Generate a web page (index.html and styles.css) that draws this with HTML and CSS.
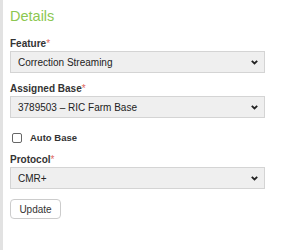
FILE: index.html
```html
<!DOCTYPE html>
<html lang="en">
<head>
    <meta charset="UTF-8">
    <title>Details</title>
    <link rel="stylesheet" href="styles.css">
</head>
<body>
    <div class="panel">
        <h2>Details</h2>
        <div class="field">
            <label>Feature<span class="req">*</span></label>
            <div class="select">
                <span>Correction Streaming</span>
                <svg class="chev" width="7" height="5" viewBox="0 0 7 5"><path d="M0.8 0.8l2.7 2.7 2.7-2.7" fill="none" stroke="#222" stroke-width="1.8"/></svg>
            </div>
        </div>
        <div class="field">
            <label>Assigned Base<span class="req">*</span></label>
            <div class="select">
                <span>3789503 &ndash; RIC Farm Base</span>
                <svg class="chev" width="7" height="5" viewBox="0 0 7 5"><path d="M0.8 0.8l2.7 2.7 2.7-2.7" fill="none" stroke="#222" stroke-width="1.8"/></svg>
            </div>
        </div>
        <div class="check">
            <span class="box"></span>
            <span>Auto Base</span>
        </div>
        <div class="field">
            <label>Protocol<span class="req">*</span></label>
            <div class="select">
                <span>CMR+</span>
                <svg class="chev" width="7" height="5" viewBox="0 0 7 5"><path d="M0.8 0.8l2.7 2.7 2.7-2.7" fill="none" stroke="#222" stroke-width="1.8"/></svg>
            </div>
        </div>
        <button class="btn">Update</button>
    </div>
</body>
</html>
```

FILE: styles.css
```css
body {
    margin: 0;
    font-family: 'Liberation Sans', Arial, sans-serif;
    background: white;
    color: #333;
}
.panel {
    border-left: 3px solid #e2e2e2;
    height: 250px;
    box-sizing: border-box;
    padding: 6px 22px 0 7px;
}
h2 {
    margin: 0 0 12px 0;
    font-size: 14.5px;
    line-height: 20px;
    font-weight: normal;
    color: #8cc751;
}
.field {
    margin-bottom: 10px;
}
label {
    display: block;
    font-size: 10px;
    line-height: 12px;
    font-weight: bold;
    color: #333;
    margin-bottom: 1px;
}
.req {
    color: #e0685f;
    font-weight: normal;
}
.select {
    height: 22px;
    box-sizing: border-box;
    border: 1px solid #d4d4d4;
    background: #efefef;
    display: flex;
    align-items: center;
    justify-content: space-between;
    padding: 0 6px 0 7px;
    font-size: 10px;
    color: #222;
}
.chev {
    display: block;
}
.check {
    display: flex;
    align-items: center;
    gap: 8px;
    height: 13px;
    font-size: 9.5px;
    font-weight: bold;
    margin: 13px 0 10px 2px;
}
.box {
    width: 8px;
    height: 8px;
    border: 1px solid #666;
    border-radius: 2px;
}
.btn {
    display: block;
    font-family: inherit;
    font-size: 10px;
    color: #333;
    background: white;
    border: 1px solid #ccc;
    border-radius: 4px;
    height: 20px;
    width: 51px;
    padding: 0;
}
```
